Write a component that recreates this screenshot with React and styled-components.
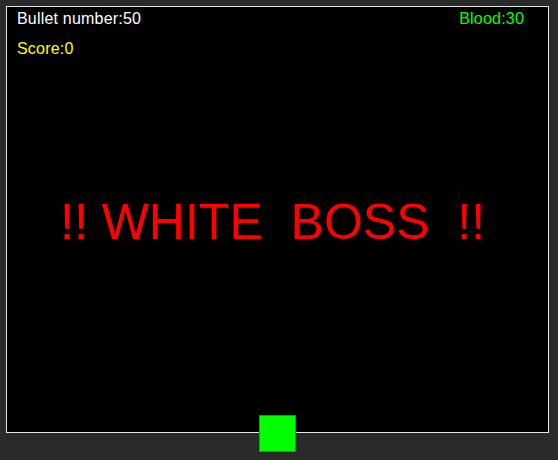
import React from "react";
import styled, { createGlobalStyle } from "styled-components";

const GlobalStyle = createGlobalStyle`
    html, body {
        margin: 0;
        padding: 0;
        background: #2a2a2a;
    }
    body {
        width: 558px;
        height: 460px;
        overflow: hidden;
        font-family: "Liberation Sans", Arial, sans-serif;
    }
`;

const Page = styled.div`
    padding: 6px 0 0 6px;
`;

const Stage = styled.div`
    position: relative;
    box-sizing: border-box;
    width: 543px;
    height: 427px;
    background: #000;
    border: 1px solid #e6e6e6;
    display: flex;
    flex-direction: column;
`;

const Hud = styled.div`
    display: flex;
    justify-content: space-between;
    padding: 4px 24px 0 10px;
`;

const HudColumn = styled.div`
    display: flex;
    flex-direction: column;
    gap: 14px;
`;

const Stat = styled.div`
    font-size: 16px;
    line-height: 16px;
    letter-spacing: 0.2px;
    color: ${props => props.color};
`;

const Banner = styled.div`
    margin-top: 140px;
    padding-left: 53px;
    font-size: 50px;
    line-height: 50px;
    color: #ff0000;
    white-space: pre;
`;

const Player = styled.div`
    position: absolute;
    left: 252px;
    top: 408px;
    width: 37px;
    height: 37px;
    box-sizing: border-box;
    background: #00ff00;
    border: 1px solid #2f8f2f;
`;

export default function App() {
    return (
        <>
            <GlobalStyle />
            <Page>
                <Stage>
                    <Hud>
                        <HudColumn>
                            <Stat color="#ffffff">Bullet number:50</Stat>
                            <Stat color="#ffff00">Score:0</Stat>
                        </HudColumn>
                        <Stat color="#00ff00">Blood:30</Stat>
                    </Hud>
                    <Banner>{"!! WHITE  BOSS  !!"}</Banner>
                    <Player />
                </Stage>
            </Page>
        </>
    );
}
